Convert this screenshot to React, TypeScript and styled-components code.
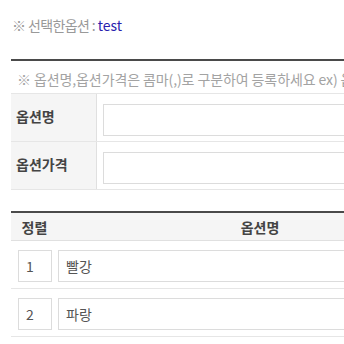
import React from 'react';
import styled, { createGlobalStyle } from 'styled-components';

const GlobalStyle = createGlobalStyle`
  html, body {
    margin: 0;
    padding: 0;
    background: #fff;
    overflow: hidden;
  }
  body {
    font-family: "Noto Sans CJK KR", "Noto Sans", sans-serif;
    font-size: 14px;
    color: #555;
  }
`;

const Page = styled.div`
  width: 344px;
  height: 344px;
  overflow: hidden;
`;

const Inner = styled.div`
  width: 760px;
  padding: 0 0 0 11px;
`;

const Selected = styled.p`
  margin: 0;
  padding: 15px 0 0 1px;
  height: 29px;
  line-height: 20px;
  font-size: 14px;
  color: #999;
  letter-spacing: -0.6px;
`;

const SelectedValue = styled.span`
  color: #2a1fae;
  letter-spacing: 0;
`;

const FormBox = styled.div`
  margin-top: 15px;
  border-top: 2px solid #4a4a4a;
`;

const Note = styled.p`
  margin: 0;
  height: 32px;
  line-height: 37px;
  padding-left: 6px;
  font-size: 14px;
  color: #a3a3a3;
  white-space: nowrap;
  letter-spacing: -0.1px;
`;

const FormTable = styled.div`
  border-top: 1px solid #e6e6e6;
`;

const FormRow = styled.div`
  display: grid;
  grid-template-columns: 86px 1fr;
  border-bottom: 1px solid #e6e6e6;
  height: 47px;
`;

const FormLabel = styled.div`
  display: flex;
  align-items: center;
  padding-left: 5px;
  background: #f5f5f5;
  border-right: 1px solid #e0e0e0;
  font-weight: 700;
  font-size: 14px;
  color: #444;
  padding-bottom: 3px;
`;

const FormCell = styled.div`
  padding: 10px 0 0 6px;
`;

const TextInput = styled.div<{ w?: number }>`
  box-sizing: border-box;
  height: 32px;
  width: ${(p) => (p.w ? `${p.w}px` : '100%')};
  border: 1px solid #dcdcdc;
  background: #fff;
  padding-left: 7px;
  display: flex;
  align-items: center;
  font-size: 14px;
  color: #555;
`;

const ListBox = styled.div`
  margin-top: 21px;
  border-top: 2px solid #4a4a4a;
`;

const HeadRow = styled.div`
  display: grid;
  grid-template-columns: 47px 404px 1fr;
  height: 27px;
  background: #f5f5f5;
  border-bottom: 1px solid #e0e0e0;
`;

const HeadCell = styled.div`
  display: flex;
  align-items: center;
  justify-content: center;
  font-weight: 700;
  font-size: 14px;
  color: #444;
`;

const ItemRow = styled.div`
  display: grid;
  grid-template-columns: 47px 1fr;
  height: 47px;
  border-bottom: 1px solid #e6e6e6;
`;

const SortCell = styled.div`
  padding: 9px 0 0 7px;
`;

const NameCell = styled.div`
  padding: 9px 0 0 0;
`;

const options = [
  { sort: 1, name: '빨강' },
  { sort: 2, name: '파랑' },
];

export default function App() {
  return (
    <Page>
      <GlobalStyle />
      <Inner>
        <Selected>
          ※ 선택한옵션 : <SelectedValue>test</SelectedValue>
        </Selected>
        <FormBox>
          <Note>※ 옵션명,옵션가격은 콤마(,)로 구분하여 등록하세요 ex) 옵션명 : 빨강,파랑,노랑</Note>
          <FormTable>
            <FormRow>
              <FormLabel>옵션명</FormLabel>
              <FormCell>
                <TextInput />
              </FormCell>
            </FormRow>
            <FormRow>
              <FormLabel>옵션가격</FormLabel>
              <FormCell>
                <TextInput />
              </FormCell>
            </FormRow>
          </FormTable>
        </FormBox>
        <ListBox>
          <HeadRow>
            <HeadCell>정렬</HeadCell>
            <HeadCell>옵션명</HeadCell>
            <HeadCell />
          </HeadRow>
          {options.map((o) => (
            <ItemRow key={o.sort}>
              <SortCell>
                <TextInput w={34}>{o.sort}</TextInput>
              </SortCell>
              <NameCell>
                <TextInput>{o.name}</TextInput>
              </NameCell>
            </ItemRow>
          ))}
        </ListBox>
      </Inner>
    </Page>
  );
}
